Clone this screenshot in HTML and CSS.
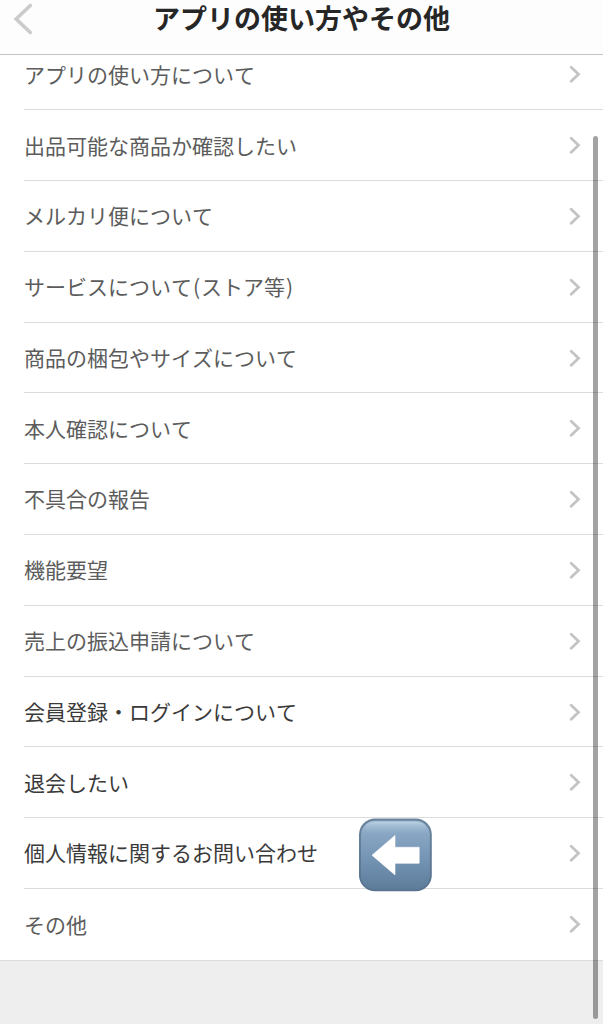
FILE: index.html
```
<!DOCTYPE html>
<html lang="ja">
<head>
<meta charset="utf-8">
<title>アプリの使い方やその他</title>
<link rel="stylesheet" href="styles.css">
</head>
<body>
<svg class="sprite" aria-hidden="true"><symbol id="chevron" viewBox="0 0 12 18"><path d="M2.2 2.2l7.3 7-7.3 7" fill="none" stroke="currentColor" stroke-width="2.8" stroke-linecap="round"/></symbol></svg>
<div class="screen">
  <header class="header">
    <svg class="back" viewBox="0 0 20 32"><path d="M17.3 2.5L3.2 16l14.1 13.5" fill="none" stroke="currentColor" stroke-width="3.6" stroke-linecap="round"/></svg>
    <h1 class="title">アプリの使い方やその他</h1>
  </header>
  <ul class="list">
    <li class="row"><span class="label">アプリの使い方について</span><svg class="chevron"><use href="#chevron"/></svg></li>
    <li class="row"><span class="label">出品可能な商品か確認したい</span><svg class="chevron"><use href="#chevron"/></svg></li>
    <li class="row"><span class="label">メルカリ便について</span><svg class="chevron"><use href="#chevron"/></svg></li>
    <li class="row"><span class="label">サービスについて<span class="paren">(</span>ストア等<span class="paren">)</span></span><svg class="chevron"><use href="#chevron"/></svg></li>
    <li class="row"><span class="label">商品の梱包やサイズについて</span><svg class="chevron"><use href="#chevron"/></svg></li>
    <li class="row"><span class="label">本人確認について</span><svg class="chevron"><use href="#chevron"/></svg></li>
    <li class="row"><span class="label">不具合の報告</span><svg class="chevron"><use href="#chevron"/></svg></li>
    <li class="row"><span class="label">機能要望</span><svg class="chevron"><use href="#chevron"/></svg></li>
    <li class="row"><span class="label">売上の振込申請について</span><svg class="chevron"><use href="#chevron"/></svg></li>
    <li class="row row-dark"><span class="label">会員登録・ログインについて</span><svg class="chevron"><use href="#chevron"/></svg></li>
    <li class="row row-dark"><span class="label">退会したい</span><svg class="chevron"><use href="#chevron"/></svg></li>
    <li class="row row-dark"><span class="label">個人情報に関するお問い合わせ</span><svg class="pointer" viewBox="0 0 74 74">
        <defs>
          <linearGradient id="face" x1="0" y1="0" x2="0" y2="1"><stop offset="0" stop-color="#a3bdd4"/><stop offset=".2" stop-color="#88a6c3"/><stop offset=".6" stop-color="#7292b2"/><stop offset="1" stop-color="#5e7c9a"/></linearGradient>
          <linearGradient id="rim" x1="0" y1="0" x2="0" y2="1"><stop offset="0" stop-color="#6a849d"/><stop offset="1" stop-color="#58738f"/></linearGradient>
          <linearGradient id="shine" x1="0" y1="0" x2="0" y2="1"><stop offset="0" stop-color="#b9cfe1"/><stop offset="1" stop-color="#86a5c2" stop-opacity="0"/></linearGradient>
        </defs>
        <rect x="1" y=".6" width="72.8" height="72.6" rx="16" fill="url(#rim)"/>
        <rect x="3" y="2.8" width="68.8" height="68.6" rx="14" fill="url(#face)"/>
        <rect x="7" y="4" width="61" height="12" rx="9" fill="url(#shine)"/>
        <path d="M14 37.2L37 17.5v11.8h24.2v16H37v11.6z" fill="#fff" stroke="#fff" stroke-width=".6" stroke-linejoin="round"/>
      </svg><svg class="chevron"><use href="#chevron"/></svg></li>
    <li class="row row-last"><span class="label">その他</span><svg class="chevron"><use href="#chevron"/></svg></li>
  </ul>
  <div class="scrollbar"></div>
</div>
</body>
</html>
```
FILE: styles.css
```
body {
  margin: 0;
  background: #eee;
  font-family: "Noto Sans CJK JP", sans-serif;
  font-kerning: none;
}
.sprite {
  position: absolute;
  width: 0;
  height: 0;
}
.screen {
  position: relative;
  height: 1024px;
  overflow: hidden;
}
.header {
  position: relative;
  z-index: 1;
  height: 55px;
  box-sizing: border-box;
  border-bottom: 1px solid #c4c4c4;
  background: #fdfdfd;
}
.back {
  position: absolute;
  left: 13px;
  top: 3px;
  width: 20px;
  height: 32px;
  color: #cbcbcb;
}
.title {
  margin: 0;
  text-align: center;
  font-size: 27px;
  line-height: 36px;
  font-weight: 700;
  color: #262626;
}
.list {
  margin: -15.5px 0 0;
  padding: 0 0 0 24px;
  list-style: none;
  background: #fff;
  border-bottom: 1px solid #dcdcdc;
}
.row {
  position: relative;
  display: flex;
  align-items: center;
  justify-content: space-between;
  height: 70.81px;
  box-sizing: border-box;
  padding-right: 22px;
  border-bottom: 1px solid #dcdcdc;
  font-size: 21px;
  line-height: 30px;
  color: #5c5c5c;
}
.row-dark {
  color: #3a3a3a;
}
.row-last {
  height: 70.7px;
  border-bottom: 0;
}
.label {
  padding-bottom: 1.4px;
}
.paren {
  margin: 0 1px;
}
.chevron {
  width: 12px;
  height: 18px;
  color: #c4c4c4;
}
.pointer {
  position: absolute;
  left: 334px;
  top: 0;
  width: 74px;
  height: 74px;
  z-index: 1;
}
.scrollbar {
  position: absolute;
  right: 5px;
  top: 136px;
  width: 5px;
  height: 883px;
  border-radius: 3px;
  background: rgba(0, 0, 0, .36);
  z-index: 2;
}
```
